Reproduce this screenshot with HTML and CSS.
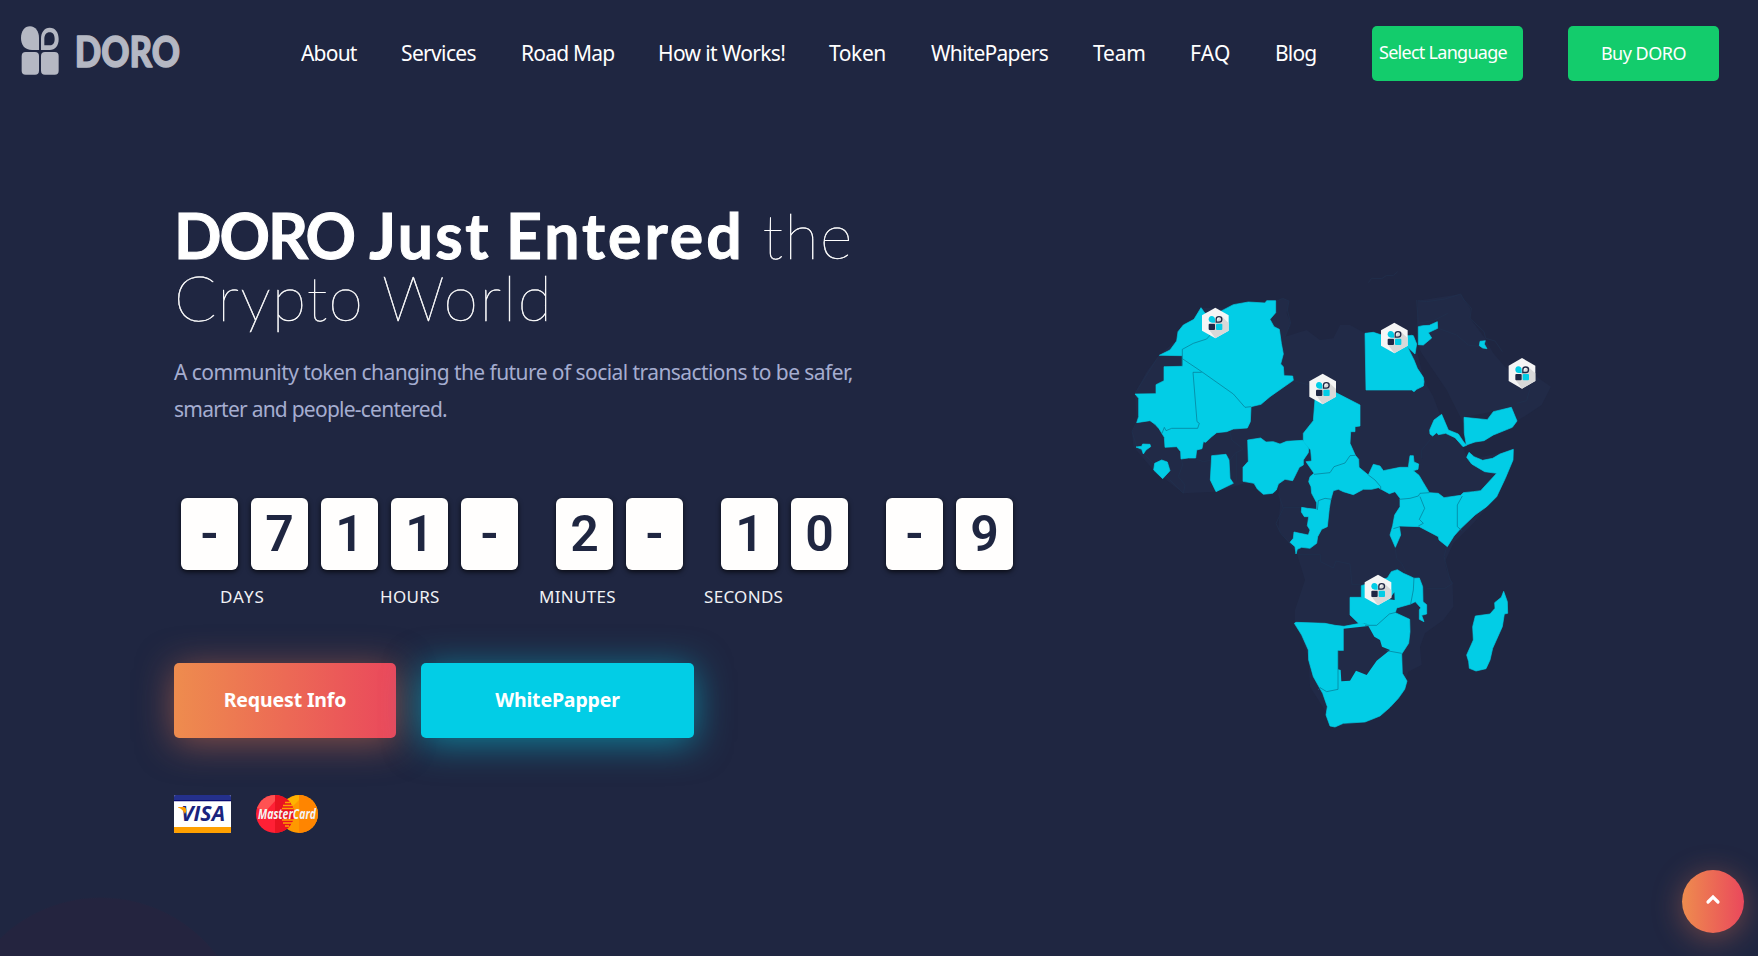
FILE: index.html
```html
<!DOCTYPE html>
<html lang="en">
<head>
<meta charset="utf-8">
<title>DORO</title>
<link rel="stylesheet" href="styles.css">
</head>
<body>
<header class="header">
  <a class="logo" href="#">
    <svg width="170" height="50" viewBox="60 78 510 150" fill="#b5b8c3">
      <path d="M117 150H96C74 150 63 135 63 114 63 93 74 79 90 79 107 79 117 95 117 114z"/>
      <path fill-rule="evenodd" d="M123 150V116C123 97 133 83 149 83 166 83 176 97 176 117 176 137 166 150 149 150zM133 136H150C160 136 164 128 164 117 164 105 159 97 149 97 139 97 133 105 133 117z"/>
      <rect x="65" y="156" width="52" height="68" rx="12"/>
      <rect x="123" y="156" width="53" height="68" rx="12"/>
      <text class="logo-word" x="224" y="202" textLength="316" lengthAdjust="spacingAndGlyphs">DORO</text>
    </svg>
  </a>
  <nav class="nav">
    <a href="#" class="n1">About</a><a href="#" class="n2">Services</a><a href="#" class="n3">Road Map</a><a href="#" class="n4">How it Works!</a><a href="#" class="n5">Token</a><a href="#" class="n6">WhitePapers</a><a href="#" class="n7">Team</a><a href="#" class="n8">FAQ</a><a href="#" class="n9">Blog</a>
  </nav>
  <a class="btn-green lang" href="#">Select Language</a>
  <a class="btn-green buy" href="#">Buy DORO</a>
</header>
<main class="hero">
  <section class="intro">
    <h1><b><span class="w1">DORO</span> <span class="w2">Just</span> <span class="w3">Entered</span></b> <span class="w4">the</span><br><span class="w5">Crypto</span> <span class="w6">World</span></h1>
    <p class="lead"><span class="l1">A community token changing the future of social transactions to be safer,</span><br><span class="l2">smarter and people-centered.</span></p>
    <div class="clock">
      <div class="group"><i>-</i><i>7</i><i>1</i><i>1</i><i>-</i></div>
      <div class="group"><i>2</i><i>-</i></div>
      <div class="group"><i>1</i><i>0</i></div>
      <div class="group"><i>-</i><i>9</i></div>
    </div>
    <div class="labels"><span>DAYS</span><span>HOURS</span><span>MINUTES</span><span>SECONDS</span></div>
    <div class="actions">
      <a class="btn request" href="#">Request Info</a>
      <a class="btn white" href="#">WhitePapper</a>
    </div>
    <div class="cards">
      <svg width="57" height="38" viewBox="0 0 57 38">
        <rect width="57" height="38" rx="1.5" fill="#fff"/>
        <path d="M0 6V1.5Q0 0 1.500 0H55.500Q57 0 57 1.500V6z" fill="#24308c"/>
        <path d="M0 5.200h57v1H0z" fill="#00006e"/>
        <path d="M0 32H57V36.500Q57 38 55.500 38H1.500Q0 38 0 36.500z" fill="#ffa000"/>
        <text class="visa" x="7" y="26" textLength="44" lengthAdjust="spacingAndGlyphs">VISA</text>
        <path d="M4 12H10Q12 12 12.400 16L11 19Q9 14 4 12.500z" fill="#ffa000"/>
      </svg>
      <svg width="62" height="38" viewBox="0 0 62 38">
        <circle cx="43" cy="19" r="19" fill="#ff9800"/>
        <path d="M43 0A19 19 0 0 1 43 38z" fill="#ff8500"/>
        <path d="M31 5A19 19 0 0 1 43 0V5L37 11z" fill="#ffb300"/>
        <circle cx="19" cy="19" r="19" fill="#ff2035"/>
        <path d="M19 0A19 19 0 0 1 19 38z" fill="#e91322"/>
        <path d="M5 6A19 19 0 0 1 19 0V6L10 16L1 13z" fill="#ff5252"/>
        <path d="M29 7.500H34M27 10.500H36M26 13.500H37M26 25H37M27 28H36M29 31H33" stroke="#ffa000" stroke-width="1.500"/>
        <text class="mc" x="2" y="24" textLength="58" lengthAdjust="spacingAndGlyphs">MasterCard</text>
      </svg>
    </div>
  </section>
  <svg class="map" width="440" height="480" viewBox="0 0 1320 1440">
    <defs>
      <g id="pin">
        <path d="M0-46 40-23V23L0 46-40 23V-23z" fill="#f5f5f5"/>
        <path d="M18-20 40 0V23L0 46-20 19z" fill="#d8d8d8"/>
        <path d="M-1-1V-11C-1-17-5-21-11-21S-20-17-20-11-16-1-10-1z" fill="#02cde6"/>
        <path d="M2.500-2.500V-11C2.500-16 6-19 11-19S19.500-16 19.500-11 16-2.500 11-2.500z" fill="none" stroke="#1f2744" stroke-width="4"/>
        <rect x="-20" y="2" width="19" height="19" rx="3" fill="#1f2744"/>
        <rect x="2" y="2" width="19" height="19" rx="3" fill="#02cde6"/>
      </g>
    </defs>
    <g class="land">
      <path d="M243 143 330 145 400 124 465 124 488 115 507 123 500 160 512 190 495 230 560 210 600 240 640 235 660 195 690 195 733 218 788 224 867 227 890 270 912 360 940 410 970 490 1030 565 1045 600 1180 569 1180 600 1120 720 1060 790 1000 850 975 905 980 930 998 970 1000 1040 970 1080 915 1120 900 1160 905 1215 865 1235 855 1270 850 1300 800 1355 760 1380 650 1400 620 1360 570 1280 565 1190 525 1085 525 1050 555 960 530 880 475 810 480 730 475 680 430 703 390 665 290 695 190 700 100 630 40 560 36 515 50 490 45 400 80 335 118 285 170 240z"/>
      <path d="M893 122 1022 102 1050 145 1050 175 1095 235 1120 280 1155 320 1190 345 1235 320 1250 350 1293 380 1265 435 1220 465 1190 483 1170 445 1040 470 1030 490 980 390 905 280 893 255 890 200z"/>
    </g>
    <g class="coast">
      <path d="M745 68 755 55 785 56 800 46 820 46 833 35M890 120 895 190M893 122 920 125 975 117 1022 102 1032 120 1054 145 1050 175 1092 215 1097 235 1125 243 1147 275M955 205 1010 225 1045 255 1080 260M895 190 945 180 983 160M468 124 488 115 507 123 502 150 512 190 495 230M520 362 568 375M118 285 80 345 45 400M48 490 36 515 50 560 100 610 190 700M190 700 195 675 175 650 188 615 180 580M228 597 250 605 275 600M330 515 335 540 370 567 345 580M350 580V665M345 580 330 600M475 700 490 745 468 790 482 820 515 855M490 742 590 742M533 884H602V905L640 924 648 903 690 912 696 974 730 974M825 860 830 895 845 910 858 938M980 860 972 890 990 960 998 970 975 985 920 985M635 555 650 575M930 540 905 570 905 595M1190 430 1220 422 1230 385"/>
    </g>
    <g class="active">
      <path d="M243 143 255 160 300 155 340 134 385 126 435 129 440 122 467 122 467 158 450 178 462 200 478 208 484 250 490 282 482 312 490 320 492 347 518 348 520 361 450 410 423 433 393 440 391 485 382 504 340 507 320 515 290 518 275 530 257 547 250 545 246 566 230 570 227 594 205 594 183 597 182 575 170 560 135 562 133 532 117 506 105 493 90 482 50 488 56 470 56 415 45 402 108 401 108 374 132 362 132 320 187 319 187 287 118 286 150 270 170 243 174 215 190 195 222 178z"/>
      <path d="M48 561 65 559 68 552 90 553 92 560 78 570 70 582 65 568z"/>
      <path d="M104 610 125 600 142 606 150 632 128 656 101 630z"/>
      <path d="M275 587 318 583 327 600 330 655 340 670 288 695 271 660z"/>
      <path d="M383 540 422 534 438 546 460 545 480 552 500 544 548 541 566 565 565 578 550 600 550 615 538 622 518 662 495 658 475 672 469 690 458 700 430 703 412 687 402 670 369 664 369 622 385 604z"/>
      <path d="M585 418 640 394 720 435 720 498 705 500 705 515 692 515 690 550 706 586 716 598 717 622 745 645 760 613 780 618 790 632 840 622 865 622 868 600 870 587 880 587 882 606 896 612 894 628 880 632 897 646 910 668 928 698 955 700 972 713 1022 706 1030 698 1060 695 1082 692 1130 640 1094 635 1055 612 1040 592 1047 577 1062 590 1088 601 1118 595 1140 582 1180 568 1179 600 1156 655 1130 710 1100 740 1065 765 1020 808 1002 828 982 860 957 840 955 830 898 800 838 798 842 825 826 862 810 825 818 797 824 765 840 740 840 715 825 695 808 701 775 683 755 688 730 688 700 704 670 695 655 688 640 692 632 720 628 745 622 800 605 808 593 830 590 850 570 865 545 862 532 868 528 882 525 860 510 847 520 835 522 816 540 820 565 825 570 810 562 797 566 770 553 770 544 756 545 742 562 745 590 748 590 728 575 700 573 680 566 665 570 650 582 640 558 605 575 603 572 570 550 545 550 520 580 482z"/>
      <path d="M735 220 760 217 785 225 867 227 875 226 880 227 890 252 885 282 863 262 882 300 892 325 910 352 912 365 910 378 890 388 882 395 875 390 738 390z"/>
      <path d="M895 200 908 197 928 196 952 185 953 205 925 218 935 234 910 255 895 254z"/>
      <path d="M1080 244 1096 242 1093 252 1101 266 1088 264 1078 257z"/>
      <path d="M1032 472 1102 479 1120 455 1174 442 1191 483 1177 502 1120 525 1092 542 1065 546 1039 555 1033 520z"/>
      <path d="M929 510 942 480 965 463 985 510 1015 522 1031 546 1040 556 1029 560 1005 533 977 520 955 524 950 518 938 528 930 522z"/>
      <path d="M802 954 814 935 832 929 850 940 873 950 882 955 898 954 908 980 909 1025 920 1034 920 1062 905 1066 912 1085 898 1078 898 1050 902 1043 886 1025 872 1032 830 1044 826 1058 869 1078 870 1115 866 1150 845 1182 847 1240 861 1263 854 1288 835 1315 810 1342 780 1368 735 1386 670 1390 645 1401 630 1398 618 1365 622 1340 608 1300 580 1250 566 1200 565 1170 545 1125 523 1090 528 1087 615 1090 645 1096 672 1099 720 1090 750 1094 733 1090 718 1092 690 1065 690 1012 724 1012 724 977z"/>
      <path d="M1151 994 1162 1025 1163 1060 1153 1062 1147 1100 1118 1165 1110 1200 1098 1226 1068 1233 1048 1225 1046 1205 1040 1185 1060 1140 1058 1100 1066 1068 1110 1062 1125 1045 1124 1028 1144 1012z"/>
    </g>
    <path class="hole" d="M671 1106 745 1098 763 1130 780 1140 786 1160 810 1170 770 1202 740 1245 708 1232 690 1262 664 1264 662 1230 654 1228 654 1172 671 1172zM808 1018 823 997 824 1020z"/>
    <path class="border" d="M187 317V268L220 250 260 237 275 220M187 296 245 335 340 402 375 442 393 440M245 337H219L231 485 238 490 233 505H155L138 512 133 502 126 520M582 643 630 638 642 620 675 609 690 587 706 586M745 645 765 660 782 680V690M592 750 595 722 615 715 636 718M838 718 870 715 895 708 900 700 928 698M900 710 914 745 898 778 910 790 895 798M820 806 840 800M1027 708 1012 735V800L1024 810M654 1172V1288L620 1295 600 1283 595 1290M735 1096 770 1096 808 1062 828 1057M800 1172 845 1180M882 952 880 990 872 1032"/>
    <use href="#pin" x="286" y="189"/><use href="#pin" x="608" y="387"/><use href="#pin" x="823" y="234"/><use href="#pin" x="1206" y="340"/><use href="#pin" x="774" y="990"/>
  </svg>
</main>
<div class="glow"></div>
<a class="top" href="#"><svg width="16" height="12" viewBox="0 0 16 12"><path d="M3 9 8 4l5 5" fill="none" stroke="#fff" stroke-width="3.200" stroke-linecap="round"/></svg></a>
</body>
</html>
```
FILE: styles.css
```css
* { box-sizing: border-box; }
body {
  margin: 0;
  width: 1758px;
  height: 956px;
  overflow: hidden;
  position: relative;
  background: #1f2641;
  color: #fff;
  font-family: "Noto Sans", sans-serif;
}
a { color: inherit; text-decoration: none; white-space: nowrap; }

.header { display: flex; height: 107px; padding: 26px 39px 0 20px; }
.logo { width: 281px; }
.logo svg { display: block; }
.logo-word { font: 900 126px "Lato", sans-serif; stroke: #b5b8c3; stroke-width: 4; stroke-linejoin: round; }
.nav { display: flex; width: 1071px; font-size: 21px; line-height: 54px; letter-spacing: -0.65px; }
.n1 { width: 100px; letter-spacing: -0.8px; }
.n2 { width: 120px; }
.n3 { width: 137px; letter-spacing: -0.8px; }
.n4 { width: 171px; }
.n5 { width: 102px; letter-spacing: -0.4px; }
.n6 { width: 162px; letter-spacing: -0.75px; }
.n7 { width: 97px; letter-spacing: -0.2px; }
.n8 { width: 85px; letter-spacing: 0.2px; }
.n9 { letter-spacing: -0.8px; }
.btn-green {
  width: 151px;
  height: 55px;
  border-radius: 5px;
  background: #13cc6c;
  font-size: 18px;
  letter-spacing: -0.5px;
}
.lang { padding-left: 7px; line-height: 52px; margin-right: 45px; letter-spacing: -0.72px; }
.buy { text-align: center; line-height: 55px; }

.hero { display: flex; padding-left: 174px; }
.intro { width: 946px; padding-top: 97px; }
h1 { margin: 0; font: 100 62.5px/62px "Lato", sans-serif; white-space: nowrap; -webkit-text-stroke: 0.5px #fff; }
h1 b { font-weight: 700; -webkit-text-stroke: 1px #fff; }
.w1 { letter-spacing: -2px; }
.w2 { letter-spacing: 2.4px; }
.w3 { letter-spacing: 3px; }
.w4 { letter-spacing: 1.5px; }
.w5 { letter-spacing: 1.2px; }
.w6 { letter-spacing: 1.8px; }
.lead { margin: 26px 0 0; font-size: 21px; line-height: 37px; color: #a5add0; white-space: nowrap; }
.l1 { letter-spacing: -0.57px; }
.l2 { letter-spacing: -0.76px; }

.clock { display: flex; gap: 38px; margin: 70px 0 0 7px; }
.group { display: flex; gap: 13px; }
.group i {
  width: 57px;
  height: 72px;
  border-radius: 6px;
  background: #fffefd;
  box-shadow: 0 2px 5px rgba(0, 0, 0, .7);
  color: #1f2641;
  font: 600 50px/72px "Roboto", sans-serif;
  text-align: center;
}
.labels { display: flex; margin-top: 15px; padding-left: 46px; font-size: 17px; line-height: 24px; color: #f0f1f5; letter-spacing: 0.3px; }
.labels span:nth-child(1) { width: 160px; letter-spacing: 1px; }
.labels span:nth-child(2) { width: 159px; }
.labels span:nth-child(3) { width: 165px; }

.actions { display: flex; gap: 25px; margin-top: 54px; }
.btn { height: 75px; border-radius: 5px; font-size: 19.5px; letter-spacing: -0.15px; font-weight: 700; line-height: 73px; text-align: center; }
.request { width: 222px; background: linear-gradient(90deg, #ee8c4e, #ea485c); box-shadow: 0 5px 36px rgba(238, 120, 80, .5); }
.white { width: 273px; background: #02cde6; box-shadow: 0 5px 36px rgba(2, 205, 230, .55); }
.cards { display: flex; gap: 25px; margin-top: 57px; }
.visa { font: italic 700 21px "Open Sans", sans-serif; fill: #1a237e; }
.mc { font: italic 700 14px "Open Sans", sans-serif; fill: #f3f3f3; }

.map { display: block; margin-top: 153px; }
.land { fill: #212a47; }
.coast { fill: none; stroke: #20314e; stroke-width: 2; }
.active { fill: #02cde6; stroke: #02cde6; stroke-width: 2; stroke-linejoin: round; }
.hole { fill: #212a47; }
.border { fill: none; stroke: #087590; stroke-width: 2; }

.glow {
  position: absolute;
  left: -44px;
  top: 897px;
  width: 290px;
  height: 59px;
  background: radial-gradient(circle 146px at 145px 146px, #24243f 99%, transparent 100%);
}
.top {
  position: absolute;
  left: 1682px;
  top: 870px;
  display: flex;
  justify-content: center;
  width: 62px;
  height: 63px;
  padding-top: 23px;
  border-radius: 50%;
  background: linear-gradient(90deg, #ee8c4e, #ea485c);
  box-shadow: 0 5px 30px rgba(238, 120, 80, .4);
}
```
